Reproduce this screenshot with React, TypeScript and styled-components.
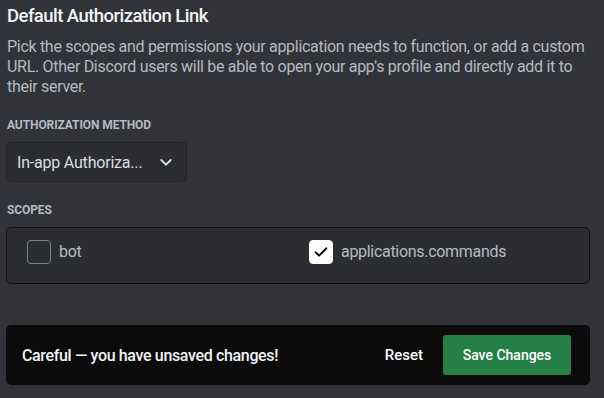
import React from "react";
import styled, { createGlobalStyle } from "styled-components";

const Global = createGlobalStyle`
  html, body { margin: 0; padding: 0; background: #313338; }
  body { font-family: Roboto, "Noto Sans", sans-serif; -webkit-font-smoothing: antialiased; }
  * { box-sizing: border-box; }
`;

const Page = styled.div`
  width: 604px;
  height: 398px;
  background: #313338;
  padding: 4px 14px 0 6px;
  overflow: hidden;
`;

const Title = styled.h2`
  margin: 0 0 9px 1px;
  font-size: 18.5px;
  line-height: 24px;
  font-weight: 500;
  letter-spacing: -0.55px;
  color: #f2f3f5;
`;

const Description = styled.p`
  margin: 0 0 20px 1px;
  font-size: 16px;
  line-height: 20px;
  letter-spacing: -0.3px;
  color: #b5bac1;
`;

const Label = styled.div`
  margin: 0 0 9px 1px;
  font-size: 12px;
  line-height: 16px;
  font-weight: 700;
  letter-spacing: -0.1px;
  text-transform: uppercase;
  color: #b5bac1;
`;

const Select = styled.div`
  width: 181px;
  height: 40px;
  display: flex;
  align-items: center;
  justify-content: space-between;
  padding: 0 12px 0 10px;
  background: #2b2d31;
  border: 1px solid #232428;
  border-radius: 4px;
  color: #dbdee1;
  font-size: 16px;
  letter-spacing: -0.2px;
  margin-bottom: 20px;
`;

const SelectText = styled.span`
  white-space: nowrap;
  overflow: hidden;
  text-overflow: ellipsis;
`;

const ScopeBox = styled.div`
  display: grid;
  grid-template-columns: 1fr 1fr;
  column-gap: 22px;
  padding: 12px 20px 19px 20px;
  background: #2b2d31;
  border: 1px solid #111214;
  border-radius: 5px;
  margin-bottom: 41px;
`;

const Scope = styled.label`
  display: flex;
  align-items: center;
  gap: 8px;
  font-size: 16px;
  line-height: 24px;
  letter-spacing: -0.3px;
  color: #b5bac1;
`;

const Box = styled.span<{ $checked?: boolean }>`
  width: 24px;
  height: 24px;
  flex: none;
  border-radius: 4px;
  display: flex;
  align-items: center;
  justify-content: center;
  background: ${(p) => (p.$checked ? "#ffffff" : "transparent")};
  border: 1px solid ${(p) => (p.$checked ? "#ffffff" : "#80848e")};
`;

const SaveBar = styled.div`
  height: 60px;
  display: flex;
  align-items: center;
  justify-content: space-between;
  padding: 0 19px 0 16px;
  background: #0b0b0c;
  border-radius: 5px;
`;

const Notice = styled.span`
  font-size: 16px;
  font-weight: 500;
  letter-spacing: -0.35px;
  color: #f2f3f5;
`;

const Actions = styled.div`
  display: flex;
  align-items: center;
  gap: 4px;
`;

const ResetButton = styled.button`
  background: none;
  border: none;
  padding: 0 16px;
  height: 40px;
  font-family: inherit;
  font-size: 15px;
  font-weight: 500;
  color: #ffffff;
`;

const SaveButton = styled.button`
  height: 40px;
  width: 128px;
  padding: 0;
  border: none;
  border-radius: 3px;
  background: #248046;
  font-family: inherit;
  font-size: 14px;
  font-weight: 500;
  color: #ffffff;
`;

const Chevron = () => (
  <svg width="16" height="16" viewBox="0 0 24 24" fill="none">
    <path d="M5 9l7 7 7-7" stroke="#dbdee1" strokeWidth="3" strokeLinecap="round" strokeLinejoin="round" />
  </svg>
);

const Check = () => (
  <svg width="16" height="16" viewBox="0 0 24 24" fill="none">
    <path d="M4 12.5l5 5L20 6.5" stroke="#000" strokeWidth="3" strokeLinecap="round" strokeLinejoin="round" />
  </svg>
);

export default function App() {
  return (
    <>
      <Global />
      <Page>
        <Title>Default Authorization Link</Title>
        <Description>
          Pick the scopes and permissions your application needs to function, or add a custom
          URL. Other Discord users will be able to open your app's profile and directly add it to
          their server.
        </Description>
        <Label>Authorization Method</Label>
        <Select>
          <SelectText>In-app Authoriza...</SelectText>
          <Chevron />
        </Select>
        <Label>Scopes</Label>
        <ScopeBox>
          <Scope>
            <Box />
            bot
          </Scope>
          <Scope>
            <Box $checked>
              <Check />
            </Box>
            applications.commands
          </Scope>
        </ScopeBox>
        <SaveBar>
          <Notice>Careful — you have unsaved changes!</Notice>
          <Actions>
            <ResetButton>Reset</ResetButton>
            <SaveButton>Save Changes</SaveButton>
          </Actions>
        </SaveBar>
      </Page>
    </>
  );
}
